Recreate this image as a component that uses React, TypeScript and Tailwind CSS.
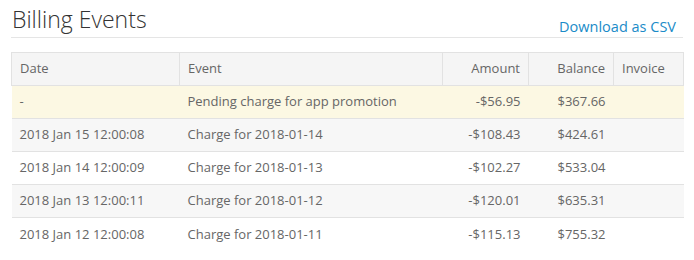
import React from "react";

const rows = [
  { date: "-", event: "Pending charge for app promotion", amount: "-$56.95", balance: "$367.66", bg: "bg-[#fcf8e3]" },
  { date: "2018 Jan 15 12:00:08", event: "Charge for 2018-01-14", amount: "-$108.43", balance: "$424.61", bg: "bg-[#f7f7f7]" },
  { date: "2018 Jan 14 12:00:09", event: "Charge for 2018-01-13", amount: "-$102.27", balance: "$533.04", bg: "bg-white" },
  { date: "2018 Jan 13 12:00:11", event: "Charge for 2018-01-12", amount: "-$120.01", balance: "$635.31", bg: "bg-[#f7f7f7]" },
  { date: "2018 Jan 12 12:00:08", event: "Charge for 2018-01-11", amount: "-$115.13", balance: "$755.32", bg: "bg-white" },
];

export default function App() {
  return (
    <div className="w-[694px] h-[260px] bg-white pl-[11px] text-[#666]" style={{ fontFamily: '"Open Sans", sans-serif' }}>
      <div className="w-[672px]">
        <div className="flex items-end justify-between border-b border-[#e5e5e5] h-[38px] pb-[1px]">
          <h1 className="text-[23px] font-light text-[#333] leading-[30px] mb-[2px] ml-[1px]">Billing Events</h1>
          <a className="text-[14.5px] text-[#1a8bc8] leading-[20px] mr-[7px] -mb-[1px]">Download as CSV</a>
        </div>
        <table className="mt-[14px] w-[672px] border-collapse text-[13px] table-fixed">
          <colgroup>
            <col className="w-[168px]" />
            <col className="w-[263px]" />
            <col className="w-[86px]" />
            <col className="w-[85px]" />
            <col className="w-[70px]" />
          </colgroup>
          <thead>
            <tr className="bg-[#f5f5f5] h-[33px]">
              <th className="border border-[#e2e2e2] font-normal text-left px-[8px]">Date</th>
              <th className="border border-[#e2e2e2] font-normal text-left px-[8px]">Event</th>
              <th className="border border-[#e2e2e2] font-normal text-right px-[8px]">Amount</th>
              <th className="border border-[#e2e2e2] font-normal text-right px-[8px]">Balance</th>
              <th className="border border-[#e2e2e2] font-normal text-left px-[8px]">Invoice</th>
            </tr>
          </thead>
          <tbody>
            {rows.map((r, i) => (
              <tr key={i} className={`${r.bg} h-[33px] ${i > 0 ? "border-t border-[#e2e2e2]" : ""}`}>
                <td className="px-[8px] whitespace-nowrap">{r.date}</td>
                <td className="px-[8px] whitespace-nowrap">{r.event}</td>
                <td className="px-[8px] text-right">{r.amount}</td>
                <td className="px-[8px] text-right">{r.balance}</td>
                <td className="px-[8px]"></td>
              </tr>
            ))}
          </tbody>
        </table>
      </div>
    </div>
  );
}
